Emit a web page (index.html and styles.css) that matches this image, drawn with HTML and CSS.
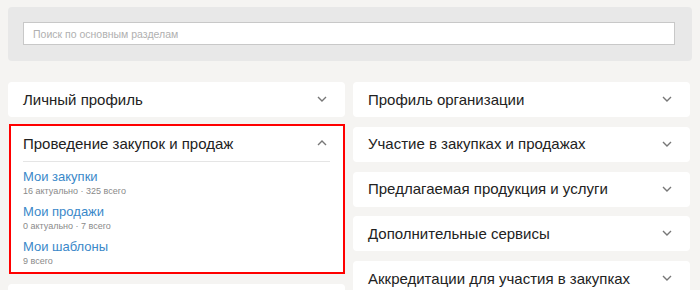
FILE: index.html
```html
<!DOCTYPE html>
<html>
<head lang="ru">
    <meta charset="UTF-8">
    <title>Личный кабинет</title>
    <link rel="stylesheet" href="styles.css">
</head>
<body>
    <div class="search">
        <input type="text" placeholder="Поиск по основным разделам" />
    </div>

    <div class="sections">
        <div class="column">
            <div class="card">
                <span class="card-title">Личный профиль</span>
                <span class="chevron"><svg width="10" height="6" viewBox="0 0 10 6"><path d="M1 1l4 4 4-4" /></svg></span>
            </div>
            <div class="card card-open">
                <div class="card-head">
                    <span class="card-title">Проведение закупок и продаж</span>
                    <span class="chevron"><svg width="10" height="6" viewBox="0 0 10 6"><path d="M1 5l4-4 4 4" /></svg></span>
                </div>
                <ul class="links">
                    <li>
                        <a href="#">Мои закупки</a>
                        <p>16 актуально · 325 всего</p>
                    </li>
                    <li>
                        <a href="#">Мои продажи</a>
                        <p>0 актуально · 7 всего</p>
                    </li>
                    <li>
                        <a href="#">Мои шаблоны</a>
                        <p>9 всего</p>
                    </li>
                </ul>
            </div>
            <div class="card card-next"></div>
        </div>

        <div class="column">
            <div class="card">
                <span class="card-title">Профиль организации</span>
                <span class="chevron"><svg width="10" height="6" viewBox="0 0 10 6"><path d="M1 1l4 4 4-4" /></svg></span>
            </div>
            <div class="card">
                <span class="card-title">Участие в закупках и продажах</span>
                <span class="chevron"><svg width="10" height="6" viewBox="0 0 10 6"><path d="M1 1l4 4 4-4" /></svg></span>
            </div>
            <div class="card">
                <span class="card-title">Предлагаемая продукция и услуги</span>
                <span class="chevron"><svg width="10" height="6" viewBox="0 0 10 6"><path d="M1 1l4 4 4-4" /></svg></span>
            </div>
            <div class="card">
                <span class="card-title">Дополнительные сервисы</span>
                <span class="chevron"><svg width="10" height="6" viewBox="0 0 10 6"><path d="M1 1l4 4 4-4" /></svg></span>
            </div>
            <div class="card">
                <span class="card-title">Аккредитации для участия в закупках</span>
                <span class="chevron"><svg width="10" height="6" viewBox="0 0 10 6"><path d="M1 1l4 4 4-4" /></svg></span>
            </div>
        </div>
    </div>
</body>
</html>
```

FILE: styles.css
```css
body{
    margin: 0;
    padding: 7px 8px;
    background-color: #f5f4f2;
    font-family: "Liberation Sans", Arial, sans-serif;
    overflow: hidden;
}
.search{
    background-color: #e8e8e8;
    border-radius: 4px;
    padding: 15px 17px 16px 15px;
}
.search input{
    display: block;
    box-sizing: border-box;
    width: 100%;
    height: 23px;
    border: 1px #c8c8c8 solid;
    background-color: #fff;
    padding: 0 9px;
    font-family: "Liberation Sans", Arial, sans-serif;
    font-size: 10.5px;
    outline: none;
}
.search input::placeholder{
    color: #b0b0b0;
}
.sections{
    display: grid;
    grid-template-columns: 337px 337px;
    column-gap: 8px;
    margin-top: 21px;
}
.column{
    display: flex;
    flex-direction: column;
    gap: 9.75px;
}
.card{
    display: flex;
    align-items: center;
    justify-content: space-between;
    box-sizing: border-box;
    height: 35px;
    padding: 0 18px 1px 15px;
    background-color: #fff;
    border-radius: 4px;
}
.card-title{
    font-size: 15px;
    color: #222;
}
.chevron svg{
    display: block;
    fill: none;
    stroke: #777;
    stroke-width: 1.4;
}
.card-open{
    display: block;
    height: auto;
    margin-top: -3px;
    margin-left: 1px;
    padding: 0 0 4px;
    border: 2px #f00 solid;
    border-radius: 0;
}
.card-head{
    display: flex;
    align-items: center;
    justify-content: space-between;
    box-sizing: border-box;
    height: 36px;
    margin: 0 13px 0 12px;
    padding-right: 3px;
    border-bottom: 1px #e5e5e5 solid;
}
.links{
    list-style: none;
    margin: 0;
    padding: 7px 12px 0;
}
.links li{
    margin-bottom: 6px;
}
.links li:last-child{
    margin-bottom: 0;
}
.links a{
    display: block;
    line-height: 16px;
    font-size: 13px;
    color: #3a88c9;
    text-decoration: none;
}
.links p{
    margin: 0;
    line-height: 13px;
    font-size: 9px;
    color: #8a8a8a;
}
```
